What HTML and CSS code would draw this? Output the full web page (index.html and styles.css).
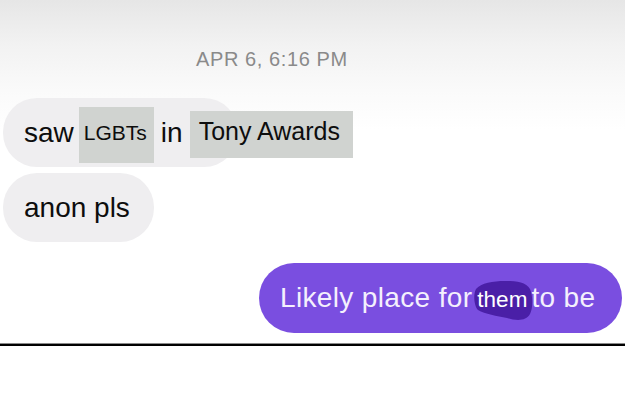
FILE: index.html
```html
<!DOCTYPE html>
<html>
<head>
<meta charset="utf-8">
<link rel="stylesheet" href="styles.css">
</head>
<body>
<div class="screen">
  <div class="stamp">APR 6, 6:16 PM</div>
  <div class="bubble in-bubble first"><span class="word">saw</span><span class="hl hl-small">LGBTs</span><span class="word gap-in">in</span><span class="hl hl-big">Tony Awards</span></div>
  <div class="bubble in-bubble second"><span class="word">anon pls</span></div>
  <div class="bubble out-bubble"><span class="word">Likely place for</span><span class="them"><svg class="scribble" width="62" height="44" viewBox="0 0 62 44"><path d="M3 9 C 8 3, 20 1, 32 1 C 44 1, 53 2, 57 9 C 60 16, 60 28, 57 34 C 53 41, 44 41, 34 38 C 24 36, 12 34, 5 30 C 1 26, 0 14, 3 9 Z"/></svg><span class="them-text">them</span></span><span class="word gap-to">to be</span></div>
</div>
<div class="rule"></div>
</body>
</html>
```

FILE: styles.css
```css
html, body {
  margin: 0;
  padding: 0;
  background: #ffffff;
}
body {
  width: 625px;
  height: 415px;
  overflow: hidden;
  font-family: "Liberation Sans", Arial, sans-serif;
}
.screen {
  height: 343px;
  box-sizing: border-box;
  padding: 47px 3px 0 3px;
  display: flex;
  flex-direction: column;
  background: linear-gradient(to bottom, #e6e6e6 0px, #f2f2f2 45px, #fafafa 90px, #ffffff 130px);
}
.rule {
  height: 1px;
  background: #8a8a8a;
  border-bottom: 2px solid #000;
}
.stamp {
  align-self: flex-start;
  margin-left: 193px;
  font-size: 20px;
  line-height: 24px;
  height: 24px;
  letter-spacing: 0.6px;
  color: #8a8a8a;
  white-space: nowrap;
}
.bubble {
  box-sizing: border-box;
  white-space: nowrap;
  font-size: 28px;
  line-height: 69px;
}
.in-bubble {
  align-self: flex-start;
  background: #efeef0;
  color: #0d0d0d;
  border-radius: 34px;
  padding-left: 21px;
  height: 69px;
}
.first {
  margin-top: 27px;
  width: 235px;
}
.second {
  margin-top: 6px;
  width: 151px;
}
.out-bubble {
  align-self: flex-end;
  margin-top: 21px;
  width: 363px;
  height: 70px;
  line-height: 70px;
  border-radius: 35px;
  background: #7a4ee0;
  color: #f4f0fd;
  padding-left: 21px;
  letter-spacing: 0.35px;
}
.hl {
  display: inline-block;
  background: #d0d3d0;
  color: #0d0d0d;
  vertical-align: 2px;
}
.hl-small {
  font-size: 21px;
  line-height: 24px;
  padding: 14px 7px 18px 5px;
  margin-left: 5px;
}
.gap-in {
  margin-left: 7px;
}
.hl-big {
  font-size: 25px;
  line-height: 29px;
  padding: 6px 13px 12px 9px;
  margin-left: 7px;
}
.them {
  position: relative;
  display: inline-block;
  font-size: 22.5px;
  line-height: 26px;
  margin-left: 5px;
  letter-spacing: 0;
  color: #ffffff;
}
.them-text {
  position: relative;
}
.scribble {
  position: absolute;
  left: -4px;
  top: -7px;
  fill: #4a1fa7;
  filter: blur(0.6px);
}
.gap-to {
  margin-left: 4px;
}
```
